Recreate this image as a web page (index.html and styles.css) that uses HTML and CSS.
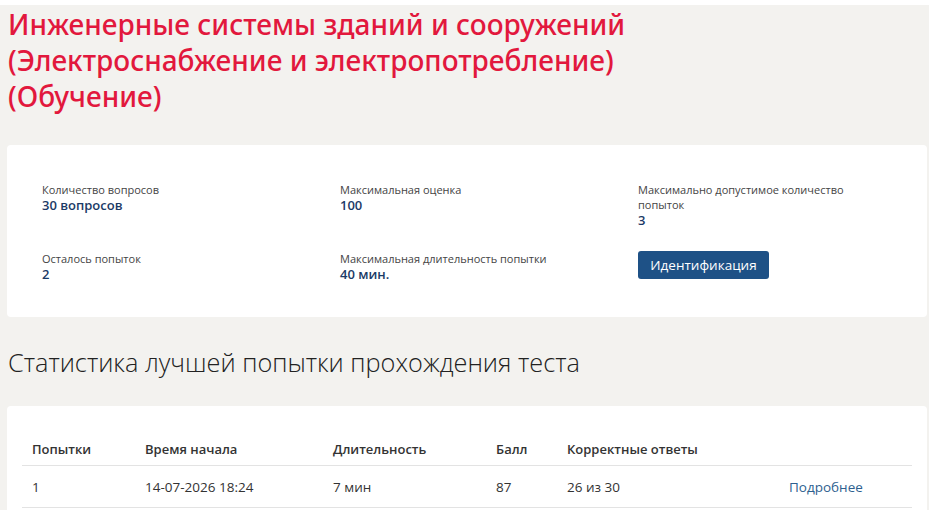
FILE: index.html
```html
<!DOCTYPE html>
<html lang="ru">
<head>
<meta charset="utf-8">
<link rel="stylesheet" href="styles.css">
</head>
<body>
<div class="page">
  <h1 class="title">Инженерные системы зданий и сооружений<br>(Электроснабжение и электропотребление)<br>(Обучение)</h1>
  <section class="card info">
    <div class="grid">
      <div class="cell"><div class="label">Количество вопросов</div><div class="value">30 вопросов</div></div>
      <div class="cell"><div class="label">Максимальная оценка</div><div class="value">100</div></div>
      <div class="cell"><div class="label">Максимально допустимое количество попыток</div><div class="value">3</div></div>
      <div class="cell"><div class="label">Осталось попыток</div><div class="value">2</div></div>
      <div class="cell"><div class="label">Максимальная длительность попытки</div><div class="value">40 мин.</div></div>
      <div class="cell"><button class="btn">Идентификация</button></div>
    </div>
  </section>
  <h2 class="subtitle">Статистика лучшей попытки прохождения теста</h2>
  <section class="card stats">
    <table class="table">
      <thead>
        <tr><th class="c1">Попытки</th><th class="c2">Время начала</th><th class="c3">Длительность</th><th class="c4">Балл</th><th class="c5">Корректные ответы</th><th class="c6"></th></tr>
      </thead>
      <tbody>
        <tr><td>1</td><td>14-07-2026 18:24</td><td>7 мин</td><td>87</td><td>26 из 30</td><td><a class="link" href="#">Подробнее</a></td></tr>
      </tbody>
    </table>
  </section>
</div>
</body>
</html>
```
FILE: styles.css
```css
html, body { margin: 0; padding: 0; background: #ffffff; }
body { font-family: "Open Sans", "Noto Sans", sans-serif; }
.page {
  margin-top: 5px;
  width: 929px;
  height: 505px;
  background: #f3f2ef;
  padding: 0 0 0 7px;
  box-sizing: border-box;
  overflow: hidden;
}
.title {
  margin: 0;
  padding: 1px 0 0 1px;
  font-family: "Noto Sans", sans-serif;
  font-weight: 500;
  font-size: 28px;
  line-height: 36px;
  color: #e2183d;
}
.card {
  background: #ffffff;
  border-radius: 4px;
  width: 920px;
}
.info {
  margin-top: 31px;
  padding: 37px 0 34px 35px;
  box-sizing: border-box;
}
.grid {
  display: grid;
  grid-template-columns: 298px 298px 260px;
  row-gap: 22px;
}
.cell { max-width: 235px; }
.label {
  font-size: 11px;
  line-height: 15px;
  color: #444444;
}
.value {
  font-size: 13px;
  line-height: 17px;
  font-weight: 600;
  color: #1b3a66;
}
.btn {
  display: block;
  width: 131px;
  height: 28px;
  border: 0;
  border-radius: 3px;
  background: #1e5186;
  color: #ffffff;
  font-family: "Open Sans", sans-serif;
  font-size: 13.5px;
  font-weight: 400;
  padding: 0;
}
.subtitle {
  margin: 29px 0 0 1px;
  font-family: "Open Sans", sans-serif;
  font-weight: 300;
  font-size: 25.3px;
  line-height: 32px;
  color: #222222;
}
.stats {
  margin-top: 28px;
  padding: 27px 15px 20px 15px;
  box-sizing: border-box;
}
.table {
  width: 890px;
  border-collapse: collapse;
  font-size: 13.5px;
  color: #333333;
}
.table th, .table td {
  text-align: left;
  padding: 0 0 0 10px;
  border-bottom: 1px solid #e3e3e3;
  vertical-align: middle;
}
.table th { font-weight: 600; font-size: 13px; height: 32px; }
.table td { height: 41px; }
.c1 { width: 103px; }
.c2 { width: 178px; }
.c3 { width: 153px; }
.c4 { width: 61px; }
.c5 { width: 212px; }
.link { color: #2e5f8f; text-decoration: none; }
```
